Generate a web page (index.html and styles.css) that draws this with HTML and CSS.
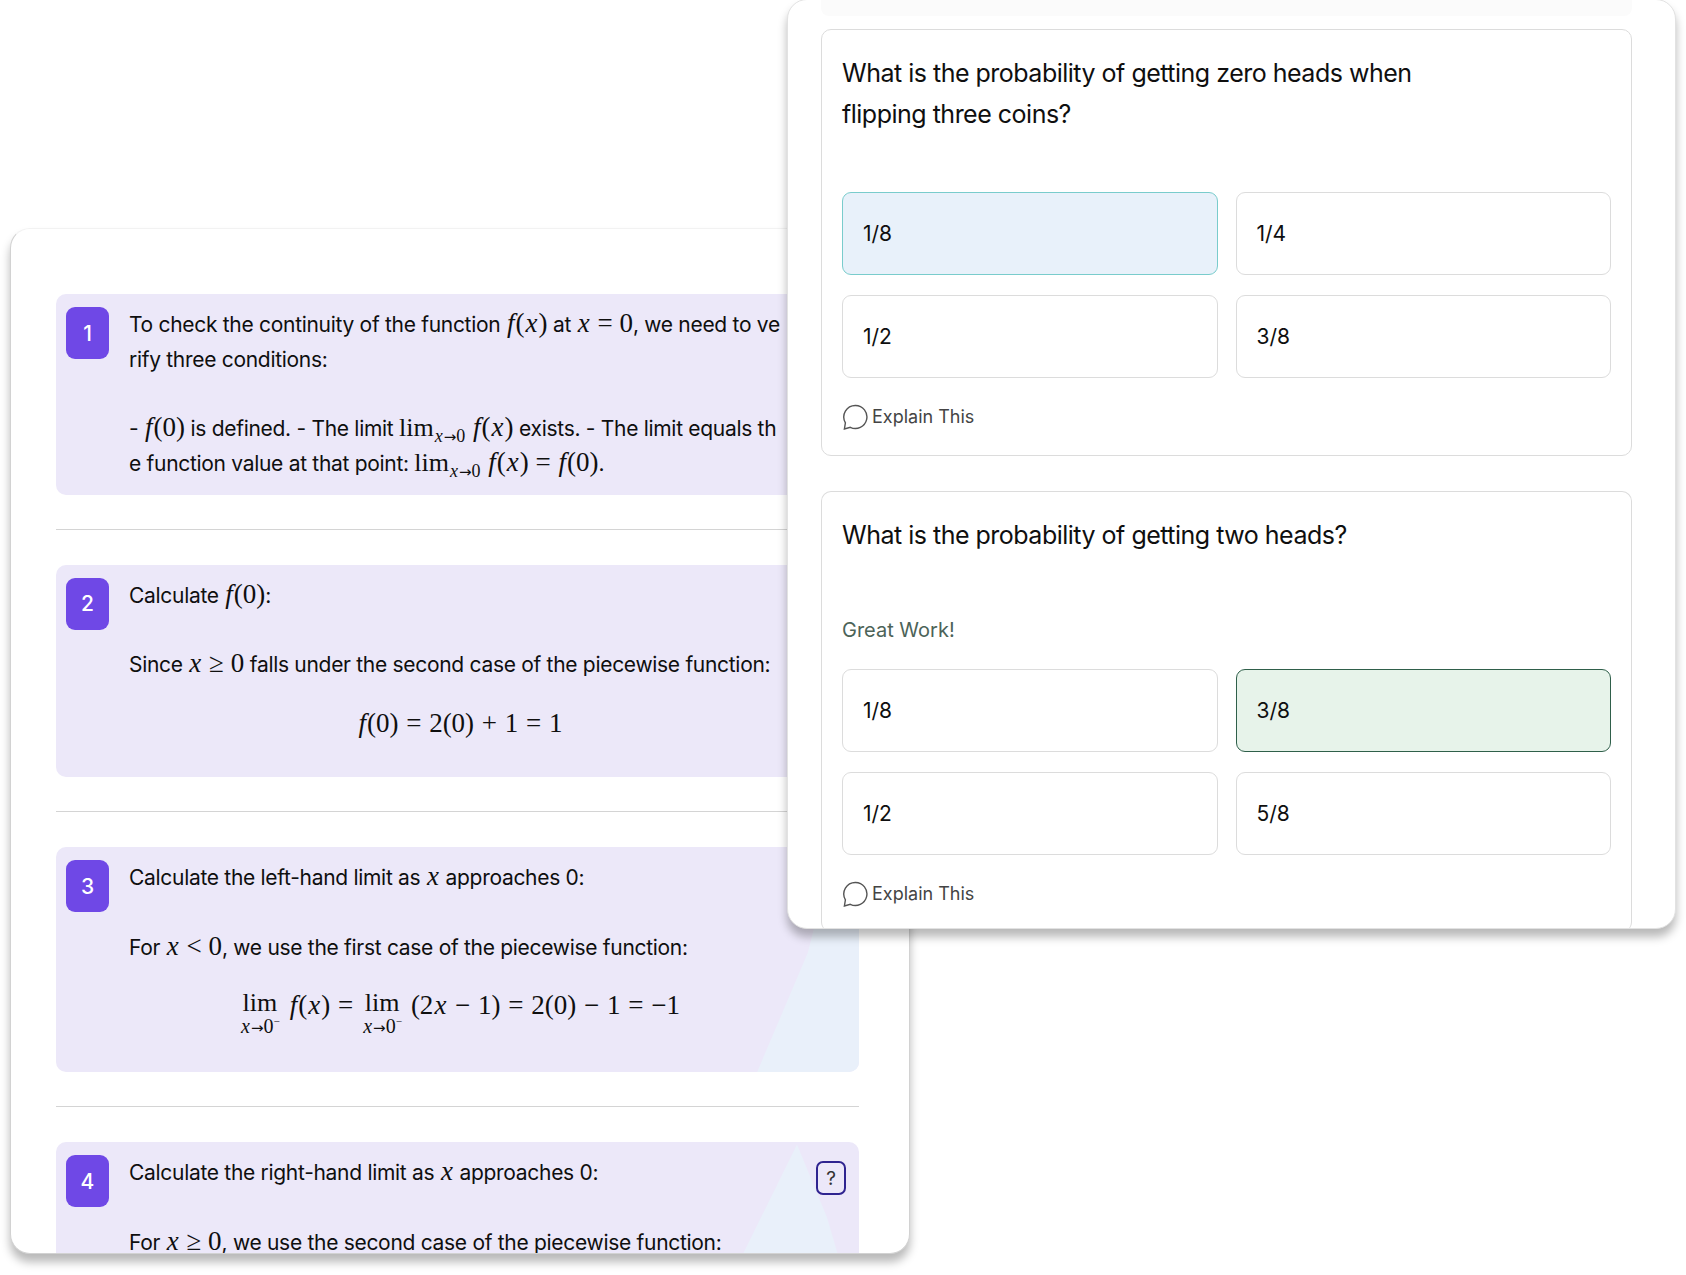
FILE: index.html
```html
<!DOCTYPE html>
<html lang="en">
<head>
  <meta charset="UTF-8" />
  <title>Step by step solution and quiz</title>
  <link rel="stylesheet" href="styles.css">
</head>
<body>
  <!-- Solution window -->
  <section class="window solution">
    <div class="step">
      <div class="badge">1</div>
      <div class="step-body">
        <p>To check the continuity of the function <span class="m"><i>f</i>(<i>x</i>)</span> at <span class="m"><i>x</i> = 0</span>, we need to ve<br>rify three conditions:</p>
        <p>- <span class="m"><i>f</i>(0)</span> is defined. - The limit <span class="m"><span class="op">lim</span><sub><i>x</i><span class="arrow">→</span>0</sub> <i>f</i>(<i>x</i>)</span> exists. - The limit equals th<br>e function value at that point: <span class="m"><span class="op">lim</span><sub><i>x</i><span class="arrow">→</span>0</sub> <i>f</i>(<i>x</i>) = <i>f</i>(0)</span>.</p>
      </div>
    </div>
    <hr class="divider">

    <div class="step">
      <div class="badge">2</div>
      <div class="step-body">
        <p>Calculate <span class="m"><i>f</i>(0)</span>:</p>
        <p>Since <span class="m"><i>x</i> ≥ 0</span> falls under the second case of the piecewise function:</p>
        <div class="equation m"><span><i>f</i>(0) = 2(0) + 1 = 1</span></div>
      </div>
    </div>
    <hr class="divider">

    <div class="step step-three">
      <div class="badge">3</div>
      <div class="step-body">
        <p>Calculate the left-hand limit as <span class="m"><i>x</i></span> approaches 0:</p>
        <p>For <span class="m"><i>x</i> &lt; 0</span>, we use the first case of the piecewise function:</p>
        <div class="equation m">
          <span class="lim"><span class="op">lim</span><small><i>x</i><span class="arrow">→</span>0<sup>−</sup></small></span>
          <span><i>f</i>(<i>x</i>) =</span>
          <span class="lim"><span class="op">lim</span><small><i>x</i><span class="arrow">→</span>0<sup>−</sup></small></span>
          <span>(2<i>x</i> − 1) = 2(0) − 1 = −1</span>
        </div>
      </div>
    </div>
    <hr class="divider">

    <div class="step step-four">
      <div class="badge">4</div>
      <div class="step-body">
        <p>Calculate the right-hand limit as <span class="m"><i>x</i></span> approaches 0:</p>
        <p>For <span class="m"><i>x</i> ≥ 0</span>, we use the second case of the piecewise function:</p>
      </div>
      <div class="help">?</div>
    </div>
  </section>

  <!-- Quiz window -->
  <section class="window quiz">
    <div class="top-strip"></div>

    <div class="card">
      <h3>What is the probability of getting zero heads when<br>flipping three coins?</h3>
      <div class="options first">
        <div class="option picked">1/8</div>
        <div class="option">1/4</div>
        <div class="option">1/2</div>
        <div class="option">3/8</div>
      </div>
      <div class="explain">
        <svg viewBox="0 0 26 26" width="26" height="26"><path d="M13.5 1.5a11.5 11.5 0 1 1-5.2 21.8L2.4 25l1-6.2A11.5 11.5 0 0 1 13.5 1.5z"/></svg>
        Explain This
      </div>
    </div>

    <div class="card open">
      <h3>What is the probability of getting two heads?</h3>
      <div class="feedback">Great Work!</div>
      <div class="options">
        <div class="option">1/8</div>
        <div class="option correct">3/8</div>
        <div class="option">1/2</div>
        <div class="option">5/8</div>
      </div>
      <div class="explain">
        <svg viewBox="0 0 26 26" width="26" height="26"><path d="M13.5 1.5a11.5 11.5 0 1 1-5.2 21.8L2.4 25l1-6.2A11.5 11.5 0 0 1 13.5 1.5z"/></svg>
        Explain This
      </div>
    </div>
  </section>
</body>
</html>
```

FILE: styles.css
```css
:root {
  --step-bg: #ece8f9;
  --step-light: #e9f0fa;
  --accent: #6f48e6;
  --text: #0f0f0f;
  --line: #dcdcdc;
}

* {
  box-sizing: border-box;
  margin: 0;
}

html, body {
  height: 100%;
}

body {
  position: relative;
  overflow: hidden;
  background: #fff;
  color: var(--text);
  font-family: 'Inter', sans-serif;
}

.window {
  position: absolute;
  overflow: hidden;
  background: #fff;
  border: 1px solid #d2d2d2;
  border-top-color: #f2f2f2;
  border-radius: 20px;
  box-shadow: 0 8px 10px rgba(0, 0, 0, 0.28);
}

/* Solution window */
.solution {
  left: 10px;
  top: 228px;
  width: 900px;
  height: 1026px;
  padding: 65px 50px 0 45px;
}

.step {
  position: relative;
  overflow: hidden;
  display: flex;
  gap: 20px;
  padding: 13px 10px 13px;
  background: var(--step-bg);
  border-radius: 10px;
}

.step-three::before,
.step-four::before {
  content: '';
  position: absolute;
  inset: 0;
  background: var(--step-light);
}

.step-three::before {
  clip-path: polygon(701px 100%, 752px 105px, 759px 77px, 100% 77px, 100% 100%);
}

.step-four::before {
  clip-path: polygon(673px 140px, 741px 2px, 771px 75px, 790px 140px);
}

.badge {
  position: relative;
  flex: none;
  display: flex;
  align-items: center;
  justify-content: center;
  width: 43px;
  height: 52px;
  background: var(--accent);
  border-radius: 9px;
  color: #fff;
  font-size: 21px;
  font-weight: 500;
}

.step-body {
  position: relative;
  flex: none;
  width: 662px;
  padding-top: 1px;
  font-size: 21px;
  line-height: 34.7px;
  letter-spacing: -0.3px;
}

.step-body p + p {
  margin-top: 34.7px;
}

.m {
  font-family: 'Liberation Serif', serif;
  font-size: 27px;
  line-height: 0;
  letter-spacing: 0;
}

.m i {
  padding: 0 1px;
}

.op {
  font-size: 26px;
}

.m sub {
  font-size: 18px;
  line-height: 0;
}

.arrow {
  font-family: 'DejaVu Sans', sans-serif;
  font-size: 15px;
}

.equation {
  margin-top: 23px;
  padding-bottom: 24px;
  display: flex;
  justify-content: center;
  gap: 9px;
  line-height: 34.7px;
  word-spacing: 1px;
  text-align: center;
}

.step-three .equation {
  padding-bottom: 22px;
}

.lim {
  display: inline-flex;
  flex-direction: column;
  align-items: center;
  line-height: 30px;
}

.lim small {
  font-size: 20px;
  line-height: 17px;
}

.lim sup {
  font-size: 11px;
  line-height: 0;
}

.help {
  position: absolute;
  right: 13px;
  top: 19px;
  display: flex;
  align-items: center;
  justify-content: center;
  width: 30px;
  height: 34px;
  border: 2px solid #2f2490;
  border-radius: 7px;
  color: #333;
  font-size: 19px;
}

.divider {
  height: 1px;
  margin: 34px 0 35px;
  border: none;
  background: #d4d4d4;
}

/* Quiz window */
.quiz {
  left: 787px;
  top: -1px;
  width: 889px;
  height: 930px;
  padding: 0 43px 0 33px;
  border-color: #e2e2e2;
}

.top-strip {
  height: 16px;
  margin-bottom: 13px;
  background: #fbfbfb;
  border-radius: 0 0 8px 8px;
}

.card {
  margin-bottom: 35px;
  padding: 23px 20px 25px;
  background: #fff;
  border: 1px solid var(--line);
  border-radius: 10px;
}

.card.open {
  border-bottom: none;
  margin-bottom: 0;
}

h3 {
  font-size: 25px;
  font-weight: 400;
  line-height: 41px;
  letter-spacing: -0.5px;
}

.feedback {
  margin: 59px 0 24px;
  color: #4c6358;
  font-size: 20px;
  line-height: 30px;
}

.options {
  display: grid;
  grid-template-columns: 1fr 1fr;
  gap: 20px 18px;
}

.options.first {
  margin-top: 57px;
}

.option {
  display: flex;
  align-items: center;
  height: 83px;
  padding-left: 20px;
  background: #fff;
  border: 1px solid var(--line);
  border-radius: 9px;
  font-size: 21px;
}

.option.picked {
  background: #e8f1fa;
  border-color: #79cccc;
}

.option.correct {
  background: #e7f3ea;
  border-color: #2f5f4a;
}

.explain {
  display: flex;
  align-items: center;
  gap: 4px;
  margin-top: 26px;
  color: #444;
  font-size: 18px;
  line-height: 26px;
}

.explain svg {
  fill: none;
  stroke: #555;
  stroke-width: 1.4;
}
```
